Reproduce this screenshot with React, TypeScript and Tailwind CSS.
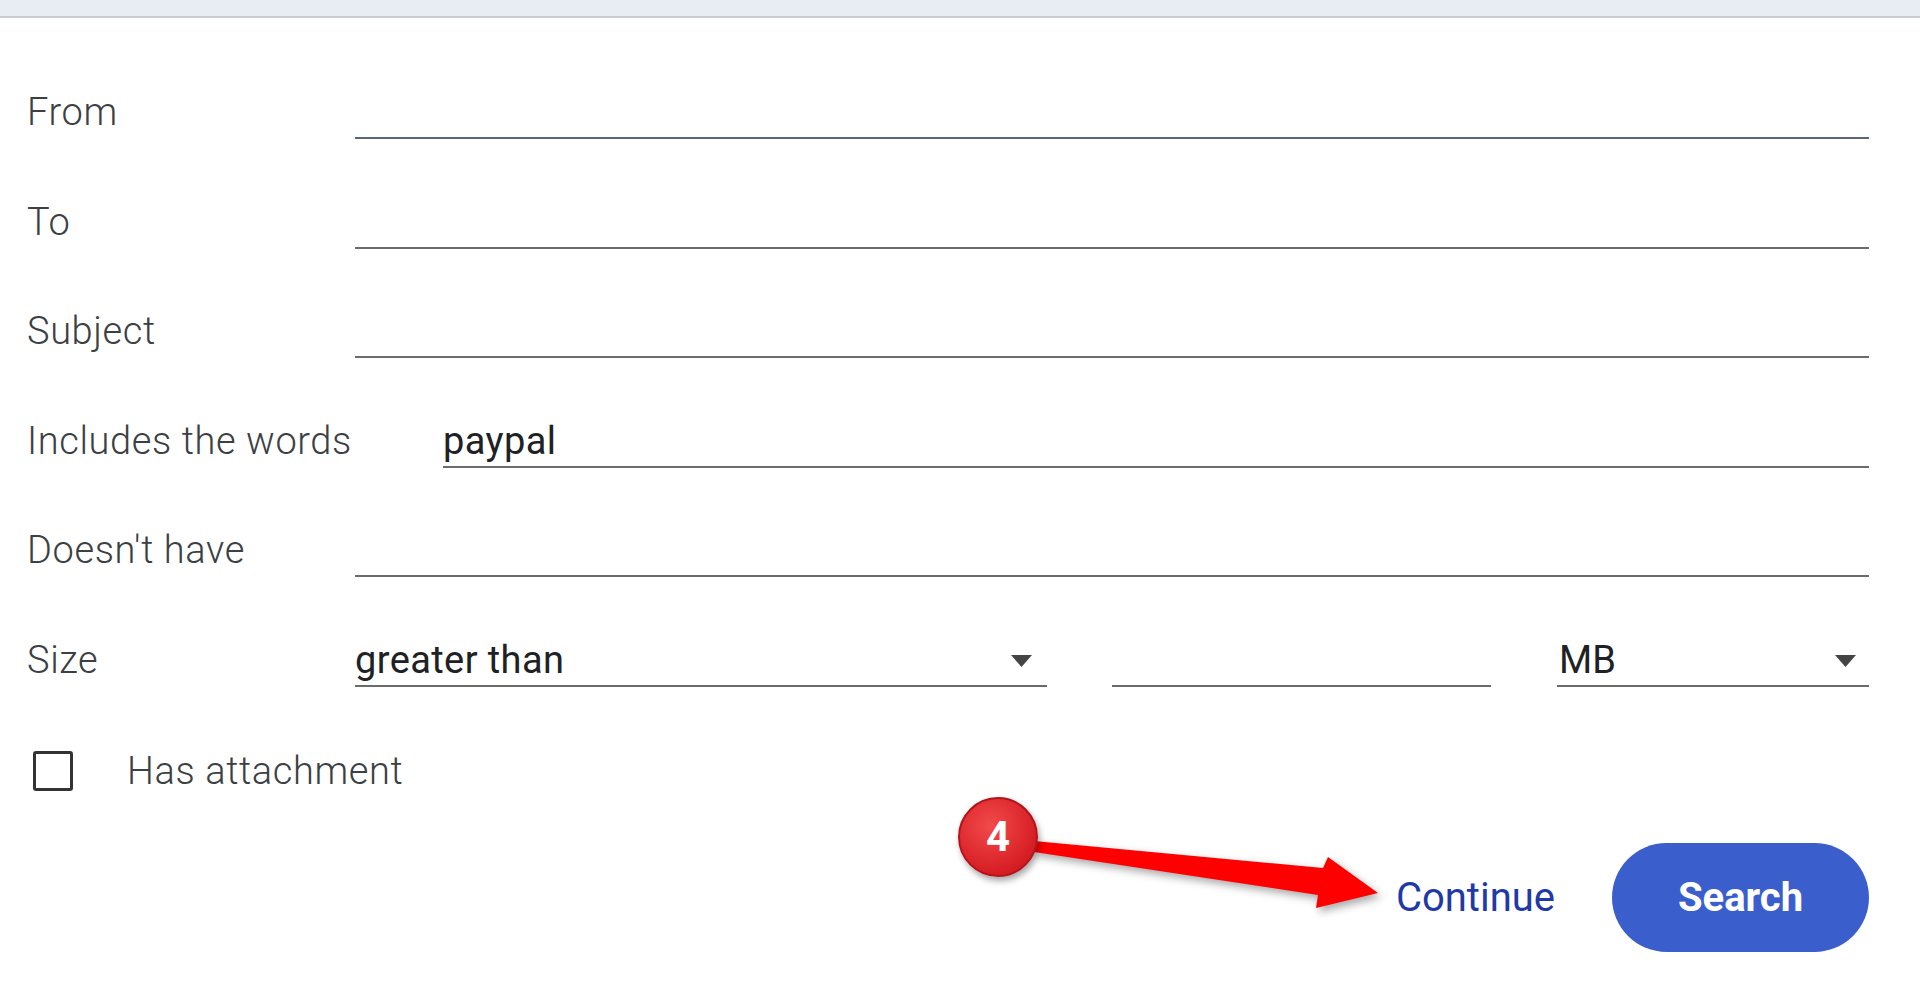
import React from "react";

const font = { fontFamily: "Roboto, 'Liberation Sans', sans-serif" };

const Caret = () => (
  <svg viewBox="0 0 21 12" className="w-[21px] h-[12px]">
    <polygon points="0,0 21,0 10.5,12" fill="#444444" />
  </svg>
);

const Field = ({ value }: { value?: string }) => (
  <div className="flex-1 h-[60px] border-b-2 border-[#6b6b6b] flex items-end pb-[6px] text-[38px] leading-none tracking-[0.4px] text-[#202124]">
    {value}
  </div>
);

const Row = ({ label, value, wide }: { label: string; value?: string; wide?: boolean }) => (
  <div className="flex items-end h-[109.5px] pb-[25px]">
    <div className={`${wide ? "w-[416px]" : "w-[328px]"} shrink-0 pb-[8px] text-[38px] font-light leading-none tracking-[0.6px] text-[#3c4043] whitespace-nowrap`}>
      {label}
    </div>
    <Field value={value} />
  </div>
);

export default function App() {
  return (
    <div className="relative w-full h-[988px] bg-white overflow-hidden" style={font}>
      <div className="h-[18px] bg-[#e8ecf3] border-b-2 border-[#c9ccd1]" />

      <div className="pt-[36.5px] pl-[27px] pr-[51px]">
        <div className="flex items-end h-[109.5px] pb-[25px]">
          <div className="w-[328px] shrink-0 pb-[8px] text-[38px] font-light leading-none tracking-[0.6px] text-[#3c4043]">From</div>
          <div className="flex-1 h-[60px] border-b-2 border-[#5b6582]" />
        </div>
        <Row label="To" />
        <Row label="Subject" />
        <Row label="Includes the words" value="paypal" wide />
        <Row label="Doesn't have" />

        <div className="flex items-end h-[109.5px] pb-[25px]">
          <div className="w-[328px] shrink-0 pb-[8px] text-[38px] font-light leading-none tracking-[0.6px] text-[#3c4043]">Size</div>
          <div className="w-[692px] h-[60px] border-b-2 border-[#6b6b6b] flex items-end justify-between pb-[6px] pr-[15px] text-[38px] leading-none tracking-[0.4px] text-[#202124]">
            <span>greater than</span>
            <span className="mb-[12px]"><Caret /></span>
          </div>
          <div className="ml-[65px] w-[379px] h-[60px] border-b-2 border-[#6b6b6b]" />
          <div className="ml-[66px] flex-1 h-[60px] border-b-2 border-[#6b6b6b] flex items-end justify-between pb-[6px] pl-[2px] pr-[13px] text-[38px] leading-none text-[#202124]">
            <span>MB</span>
            <span className="mb-[12px]"><Caret /></span>
          </div>
        </div>

        <div className="flex items-center h-[109.5px] pt-[10px]">
          <div className="ml-[6px] w-[40px] h-[40px] border-[3px] border-[#333333] rounded-[3px]" />
          <div className="ml-[54px] text-[38px] font-light leading-none tracking-[0.6px] text-[#3c4043]">Has attachment</div>
        </div>

        <div className="mt-[22px] flex items-center justify-end">
          <button className="text-[40px] leading-none text-[#1f3aa6] mr-[57px]">Continue</button>
          <button className="w-[257px] h-[109px] rounded-full bg-[#3b5ecd] text-white text-[40px] font-bold leading-none">
            Search
          </button>
        </div>
      </div>

      <svg
        viewBox="0 0 1920 988"
        className="absolute inset-0 w-[1920px] h-[988px] pointer-events-none drop-shadow-[3px_4px_4px_rgba(0,0,0,0.35)]"
      >
        <polygon
          points="1034,841 1323,868 1328,857 1378,893 1316,908 1318,895 1034,852"
          fill="#ff0000"
        />
      </svg>

      <div className="absolute left-[958px] top-[797px] w-[80px] h-[80px] rounded-full border-2 border-[#b3141b] bg-[radial-gradient(circle_at_40%_35%,#f24a4a,#d61e24_70%,#c0151b)] shadow-[2px_4px_6px_rgba(0,0,0,0.35)] flex items-center justify-center text-white text-[42px] font-bold leading-none">
        4
      </div>
    </div>
  );
}
